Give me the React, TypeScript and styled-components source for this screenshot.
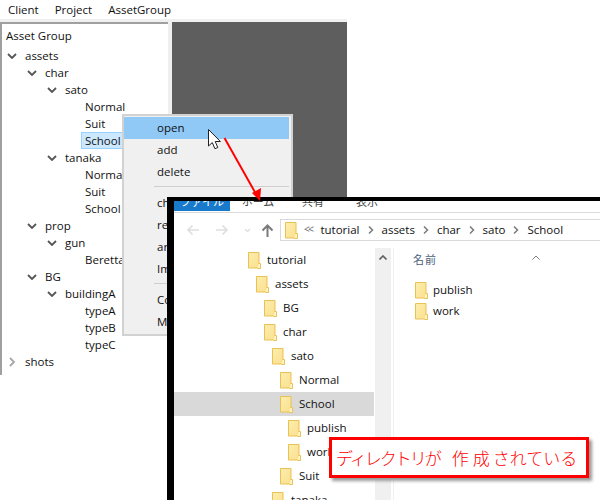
import React from 'react';
import styled, { createGlobalStyle } from 'styled-components';

const GlobalStyle = createGlobalStyle`
  html, body { margin: 0; padding: 0; background: #fff; }
  body { font-family: "Open Sans", "Noto Sans CJK JP", sans-serif; font-size: 11.5px; color: #111; }
`;

const Page = styled.div`
  position: relative;
  width: 600px;
  height: 500px;
  overflow: hidden;
  background: #fff;
`;

const AppWindow = styled.div`
  width: 347px;
  height: 375px;
  display: flex;
  flex-direction: column;
`;

const MenuBar = styled.div`
  display: flex;
  height: 19px;
  flex: none;
  align-items: center;
`;

const MenuItem = styled.div`
  padding: 0 8px;
  white-space: nowrap;
`;

const Body = styled.div`
  flex: 1;
  display: flex;
  background: #f0f0f0;
  padding-top: 3px;
`;

const TreePanel = styled.div`
  width: 168px;
  flex: none;
  box-sizing: border-box;
  background: #fff;
  border-top: 2px solid #a0a0a0;
  border-left: 2px solid #a0a0a0;
`;

const TreeTitle = styled.div`
  height: 23px;
  line-height: 24px;
  padding-left: 4px;
`;

const TreeRow = styled.div<{ $depth: number }>`
  display: flex;
  align-items: center;
  height: 17px;
  padding-left: ${(p) => 5 + p.$depth * 20}px;
  white-space: nowrap;
`;

const Twisty = styled.span`
  display: inline-flex;
  width: 18px;
  height: 17px;
  flex: none;
  align-items: center;
`;

const TreeLabel = styled.span<{ $selected?: boolean }>`
  padding: 0 2px 0 ${(p) => (p.$selected ? 3 : 0)}px;
  margin-left: ${(p) => (p.$selected ? -3 : 0)}px;
  background: ${(p) => (p.$selected ? '#cce8ff' : 'transparent')};
  outline: ${(p) => (p.$selected ? '1px solid #99d1ff' : 'none')};
`;

const DarkPanel = styled.div`
  margin-left: 4px;
  flex: 1;
  background: #5e5e5e;
`;

const ContextMenu = styled.div`
  position: absolute;
  left: 122px;
  top: 114px;
  width: 171px;
  height: 222px;
  box-sizing: border-box;
  background: #f0f0f0;
  border: 2px solid #d2d2d2;
  padding: 1px 2px 0 0;
`;

const ContextItem = styled.div<{ $active?: boolean }>`
  height: 22px;
  line-height: 22px;
  padding-left: 33px;
  background: ${(p) => (p.$active ? '#90c8f6' : 'transparent')};
`;

const ContextSeparator = styled.div`
  height: 1px;
  margin: 3px 0 5px 30px;
  background: #cfcfcf;
`;

const Explorer = styled.div`
  position: absolute;
  left: 167px;
  top: 197px;
  width: 433px;
  height: 303px;
  box-sizing: border-box;
  border-top: 4px solid #000;
  border-left: 7px solid #000;
  background: #fff;
  display: flex;
  flex-direction: column;
  overflow: hidden;
`;

const Ribbon = styled.div`
  display: flex;
  height: 11px;
  flex: none;
  border-bottom: 1px solid #dadada;
  overflow: hidden;
`;

const RibbonTab = styled.div<{ $active?: boolean; $width: number }>`
  width: ${(p) => p.$width}px;
  height: 10px;
  flex: none;
  overflow: hidden;
  text-align: center;
  font-size: 11px;
  line-height: 1px;
  color: ${(p) => (p.$active ? '#fff' : '#444')};
  background: ${(p) => (p.$active ? '#1979ca' : 'transparent')};
`;

const NavRow = styled.div`
  display: flex;
  align-items: center;
  height: 22px;
  flex: none;
  margin-top: 6px;
  padding-left: 4px;
`;

const NavButton = styled.span<{ $width: number }>`
  display: inline-flex;
  justify-content: center;
  align-items: center;
  width: ${(p) => p.$width}px;
  flex: none;
`;

const AddressBar = styled.div`
  flex: 1;
  height: 22px;
  box-sizing: border-box;
  margin-left: 4px;
  border: 1px solid #d9d9d9;
  border-right: none;
  display: flex;
  align-items: center;
  padding-left: 4px;
  white-space: nowrap;
`;

const AddressText = styled.span`
  padding-bottom: 2px;
`;

const Crumb = styled.span`
  display: inline-flex;
  margin: 0 8px;
`;

const Ellipsis = styled.span`
  margin: 0 8px 2px 6px;
  color: #666;
  font-size: 10px;
  letter-spacing: -1.5px;
`;

const Panes = styled.div`
  flex: 1;
  display: flex;
  min-height: 0;
  margin-top: 7px;
`;

const FolderTree = styled.div`
  width: 200px;
  margin-right: 1px;
  flex: none;
`;

const FolderRow = styled.div<{ $depth: number; $selected?: boolean }>`
  display: flex;
  align-items: center;
  gap: 6px;
  height: 24px;
  padding-left: ${(p) => 74 + p.$depth * 8}px;
  background: ${(p) => (p.$selected ? '#d9d9d9' : 'transparent')};
  white-space: nowrap;
`;

const FolderName = styled.span`
  padding-bottom: 2px;
`;

const ScrollTrack = styled.div`
  width: 16px;
  flex: none;
  background: #f0f0f0;
  display: flex;
  justify-content: center;
  padding-top: 7px;
  box-sizing: border-box;
`;

const FilePane = styled.div`
  flex: 1;
  border-left: 1px solid #f0f0f0;
  margin-left: 2px;
  padding-left: 19px;
  position: relative;
`;

const ColumnHeader = styled.div`
  height: 24px;
  line-height: 24px;
  color: #4c607a;
  font-size: 11px;
  letter-spacing: 1px;
  margin-bottom: 8px;
`;

const SortCaret = styled.span`
  position: absolute;
  left: 138px;
  top: 0;
`;

const FileRow = styled.div`
  display: flex;
  align-items: center;
  gap: 5px;
  height: 21px;
  padding-left: 2px;
`;

const Callout = styled.div`
  position: absolute;
  left: 329px;
  top: 437px;
  width: 260px;
  height: 41px;
  box-sizing: border-box;
  border: 3px solid #ff0000;
  background: #fff;
  box-shadow: 3px 3px 3px #9a9a9a;
  display: flex;
  align-items: center;
  padding-left: 4px;
  color: #ff0000;
  font-family: "Noto Sans CJK JP", sans-serif;
  font-size: 17px;
  font-weight: 300;
  white-space: nowrap;
`;

const CalloutRun = styled.span<{ $gap?: number; $tight?: boolean }>`
  margin-left: ${(p) => p.$gap ?? 0}px;
  letter-spacing: ${(p) => (p.$tight ? -2 : 0)}px;
`;

const Overlay = styled.svg`
  position: absolute;
  left: 0;
  top: 0;
  pointer-events: none;
`;

const FolderSvg = styled.svg`
  flex: none;
`;

const ChevronDown = () => (
  <svg width="10" height="6" viewBox="0 0 10 6">
    <path d="M1 1l4 4 4-4" fill="none" stroke="#555" strokeWidth="1.8" />
  </svg>
);

const ChevronRight = () => (
  <svg width="10" height="10" viewBox="0 0 10 10">
    <path d="M3 1l4 4-4 4" fill="none" stroke="#a6a6a6" strokeWidth="1.8" />
  </svg>
);

const Folder = () => (
  <FolderSvg width="13" height="17" viewBox="0 0 13 17">
    <defs>
      <linearGradient id="fold" x1="0" y1="0" x2="1" y2="1">
        <stop offset="0" stopColor="#fdeeb0" />
        <stop offset="1" stopColor="#fbdf8c" />
      </linearGradient>
    </defs>
    <path d="M.5.5h10.5v15.500H.5z" fill="url(#fold)" stroke="#e8c253" />
    <path d="M10.500 11.500h2v5h-3" fill="#fff3c7" stroke="#e8c253" />
  </FolderSvg>
);

const Sep = () => (
  <svg width="6" height="8" viewBox="0 0 6 8">
    <path d="M1 .5l3.500 3.500-3.500 3.500" fill="none" stroke="#7a7a7a" strokeWidth="1.5" />
  </svg>
);

const UpCaret = ({ color, width }: { color: string; width: number }) => (
  <svg width="8" height="5" viewBox="0 0 8 5">
    <path d="M.5 4.500L4 1l3.500 3.500" fill="none" stroke={color} strokeWidth={width} />
  </svg>
);

type Node = { label: string; depth: number; open?: boolean; closed?: boolean; selected?: boolean };

const tree: Node[] = [
  { label: 'assets', depth: 0, open: true },
  { label: 'char', depth: 1, open: true },
  { label: 'sato', depth: 2, open: true },
  { label: 'Normal', depth: 3 },
  { label: 'Suit', depth: 3 },
  { label: 'School', depth: 3, selected: true },
  { label: 'tanaka', depth: 2, open: true },
  { label: 'Normal', depth: 3 },
  { label: 'Suit', depth: 3 },
  { label: 'School', depth: 3 },
  { label: 'prop', depth: 1, open: true },
  { label: 'gun', depth: 2, open: true },
  { label: 'Beretta', depth: 3 },
  { label: 'BG', depth: 1, open: true },
  { label: 'buildingA', depth: 2, open: true },
  { label: 'typeA', depth: 3 },
  { label: 'typeB', depth: 3 },
  { label: 'typeC', depth: 3 },
  { label: 'shots', depth: 0, closed: true },
];

const folders: { label: string; depth: number; selected?: boolean }[] = [
  { label: 'tutorial', depth: 0 },
  { label: 'assets', depth: 1 },
  { label: 'BG', depth: 2 },
  { label: 'char', depth: 2 },
  { label: 'sato', depth: 3 },
  { label: 'Normal', depth: 4 },
  { label: 'School', depth: 4, selected: true },
  { label: 'publish', depth: 5 },
  { label: 'work', depth: 5 },
  { label: 'Suit', depth: 4 },
  { label: 'tanaka', depth: 3 },
];

const crumbs = ['assets', 'char', 'sato', 'School'];

export default function App() {
  return (
    <Page>
      <GlobalStyle />
      <AppWindow>
        <MenuBar>
          <MenuItem>Client</MenuItem>
          <MenuItem>Project</MenuItem>
          <MenuItem>AssetGroup</MenuItem>
        </MenuBar>
        <Body>
          <TreePanel>
            <TreeTitle>Asset Group</TreeTitle>
            {tree.map((n, i) => (
              <TreeRow key={i} $depth={n.depth}>
                <Twisty>
                  {n.open && <ChevronDown />}
                  {n.closed && <ChevronRight />}
                </Twisty>
                <TreeLabel $selected={n.selected}>{n.label}</TreeLabel>
              </TreeRow>
            ))}
          </TreePanel>
          <DarkPanel />
        </Body>
      </AppWindow>

      <ContextMenu>
        <ContextItem $active>open</ContextItem>
        <ContextItem>add</ContextItem>
        <ContextItem>delete</ContextItem>
        <ContextSeparator />
        <ContextItem>change</ContextItem>
        <ContextItem>rename</ContextItem>
        <ContextItem>archive</ContextItem>
        <ContextItem>Import</ContextItem>
        <ContextSeparator />
        <ContextItem>Copy</ContextItem>
        <ContextItem>Move</ContextItem>
      </ContextMenu>

      <Explorer>
        <Ribbon>
          <RibbonTab $active $width={56}>ファイル</RibbonTab>
          <RibbonTab $width={56}>ホーム</RibbonTab>
          <RibbonTab $width={54}>共有</RibbonTab>
          <RibbonTab $width={54}>表示</RibbonTab>
        </Ribbon>
        <NavRow>
          <NavButton $width={30}>
            <svg width="14" height="12" viewBox="0 0 14 12">
              <path d="M13 6H2M6.500 1.500L2 6l4.500 4.500" fill="none" stroke="#dedede" strokeWidth="1.6" />
            </svg>
          </NavButton>
          <NavButton $width={28}>
            <svg width="14" height="12" viewBox="0 0 14 12">
              <path d="M1 6h11M7.500 1.500L12 6l-4.500 4.500" fill="none" stroke="#dedede" strokeWidth="1.6" />
            </svg>
          </NavButton>
          <NavButton $width={22}>
            <svg width="7" height="5" viewBox="0 0 7 5">
              <path d="M1 1l2.500 2.500L6 1" fill="none" stroke="#dedede" strokeWidth="1.3" />
            </svg>
          </NavButton>
          <NavButton $width={18}>
            <svg width="13" height="13" viewBox="0 0 13 13">
              <path d="M6.500 13V2M1.500 6.500l5-5 5 5" fill="none" stroke="#7a7a7a" strokeWidth="2" />
            </svg>
          </NavButton>
          <AddressBar>
            <Folder />
            <Ellipsis>&lt;&lt;</Ellipsis>
            <AddressText>tutorial</AddressText>
            {crumbs.map((c) => (
              <React.Fragment key={c}>
                <Crumb><Sep /></Crumb>
                <AddressText>{c}</AddressText>
              </React.Fragment>
            ))}
          </AddressBar>
        </NavRow>
        <Panes>
          <FolderTree>
            {folders.map((f) => (
              <FolderRow key={f.label + f.depth} $depth={f.depth} $selected={f.selected}>
                <Folder />
                <FolderName>{f.label}</FolderName>
              </FolderRow>
            ))}
          </FolderTree>
          <ScrollTrack>
            <UpCaret color="#606060" width={1.6} />
          </ScrollTrack>
          <FilePane>
            <SortCaret>
              <UpCaret color="#808080" width={1} />
            </SortCaret>
            <ColumnHeader>名前</ColumnHeader>
            <FileRow><Folder /><FolderName>publish</FolderName></FileRow>
            <FileRow><Folder /><FolderName>work</FolderName></FileRow>
          </FilePane>
        </Panes>
      </Explorer>

      <Callout>
        <CalloutRun $tight>ディレクトリが</CalloutRun>
        <CalloutRun $gap={12}>作</CalloutRun>
        <CalloutRun $gap={4}>成</CalloutRun>
        <CalloutRun $gap={3}>されている</CalloutRun>
      </Callout>

      <Overlay width="600" height="500" viewBox="0 0 600 500">
        <path d="M224.500 138L256 194" stroke="#ff0000" strokeWidth="2" fill="none" />
        <path d="M252 193l9-5 -1 13z" fill="#ff0000" />
        <path
          d="M208.500 129.500v16.500l3.800-3.400 2.600 6.100 2.900-1.200-2.600-6h5.200z"
          fill="#fff"
          stroke="#222"
          strokeWidth="1"
        />
      </Overlay>
    </Page>
  );
}
